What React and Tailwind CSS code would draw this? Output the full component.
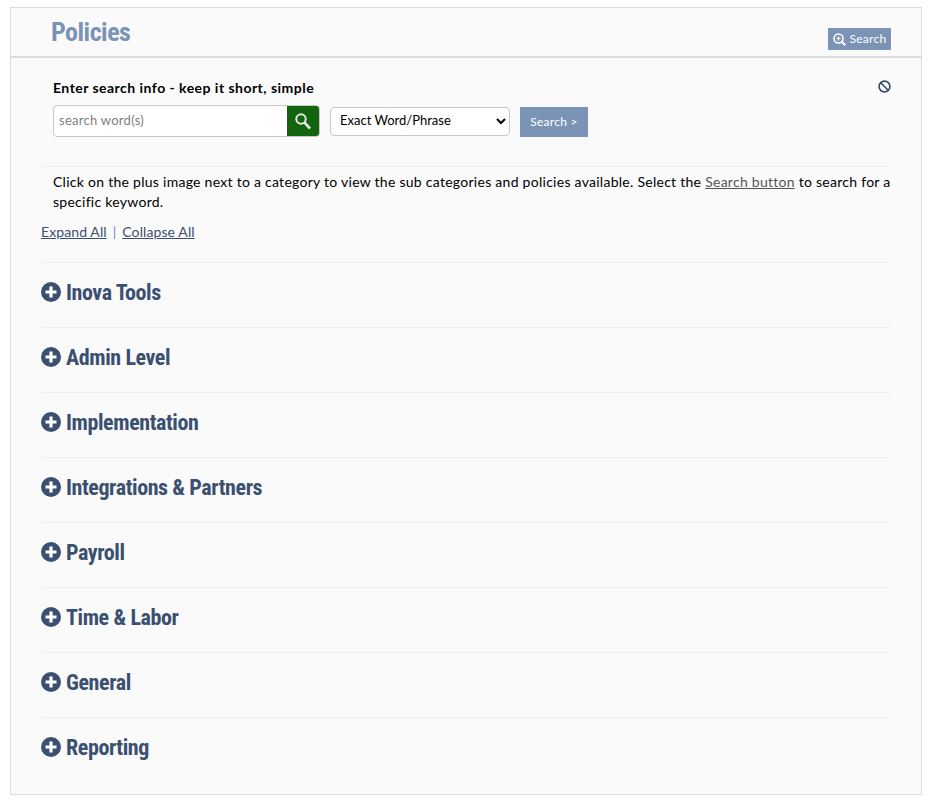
import React from 'react';

const categories = [
  'Inova Tools',
  'Admin Level',
  'Implementation',
  'Integrations & Partners',
  'Payroll',
  'Time & Labor',
  'General',
  'Reporting',
];

const headingFont = "font-['Roboto',sans-serif] [font-stretch:75%]";

const PlusIcon = () => (
  <svg width="20" height="20" viewBox="0 0 20 20" className="shrink-0">
    <circle cx="10" cy="10" r="10" fill="#3b5070" />
    <path d="M10 4.5v11M4.5 10h11" stroke="#fff" strokeWidth="3.2" />
  </svg>
);

const App = () => {
  return (
    <div className="bg-white h-[808px] pt-[7px] pl-[10px] font-['Lato',sans-serif] text-[14px] tracking-[0.27px]">
      <div className="w-[912px] h-[788px] border border-[#dcdcdc] bg-[#fafafa]">
        {/* Header */}
        <div className="h-[50px] border-b-2 border-[#dcdcdc] flex justify-between pl-[40px] pr-[30px]">
          <h1 className={`${headingFont} text-[26px] leading-[48px] font-bold tracking-[-0.5px] text-[#7b93b4]`}>Policies</h1>
          <button className="mt-[20px] w-[63px] h-[22px] bg-[#7b93b4] text-white text-[12px] flex items-center justify-center gap-1">
            <svg width="13" height="13" viewBox="0 0 13 13" fill="none" stroke="#fff">
              <circle cx="5.5" cy="5.5" r="4.5" strokeWidth="1.6" />
              <path d="M9 9l3.2 3.2" strokeWidth="2.2" />
              <path d="M3.5 5.5h4M5.5 3.5v4" strokeWidth="1.2" />
            </svg>
            Search
          </button>
        </div>

        <div className="px-[30px]">
          {/* Search form */}
          <div className="relative h-[109px] border-b border-[#eeeeee] pt-[21px] pl-[12px]">
            <div className="font-bold text-black leading-[18px] tracking-[0.47px]">Enter search info - keep it short, simple</div>
            <div className="flex items-center mt-[8px]">
              <div className="flex w-[267px] h-[32px] border border-[#c8c8c8] rounded-[4px] overflow-hidden bg-white">
                <div className="flex-1 pl-[5px] leading-[28px] text-[13px] text-[#808080]">search word(s)</div>
                <div className="w-[32px] bg-[#13640f] flex items-center justify-center">
                  <svg width="18" height="18" viewBox="0 0 18 18" fill="none" stroke="#e4e8e4">
                    <circle cx="7" cy="7" r="4.7" strokeWidth="2" />
                    <path d="M10.5 10.5l5.5 6" strokeWidth="2.6" />
                  </svg>
                </div>
              </div>
              <select
                defaultValue="Exact Word/Phrase"
                className="ml-[10px] w-[180px] h-[29px] border border-[#c8c8c8] rounded-[4px] bg-white pl-[5px] pb-[2px] text-black text-[13px] tracking-normal"
              >
                <option>Exact Word/Phrase</option>
                <option>Any Word</option>
              </select>
              <button className="ml-[10px] w-[68px] h-[30px] mt-[1px] bg-[#7b93b4] text-white text-[12px]">Search &gt;</button>
            </div>
            <svg
              width="13"
              height="13"
              viewBox="0 0 13 13"
              fill="none"
              stroke="#334a68"
              strokeWidth="1.6"
              className="absolute right-0 top-[22px]"
            >
              <circle cx="6.5" cy="6.5" r="5.4" />
              <path d="M2.8 2.8l7.4 7.4" />
            </svg>
          </div>

          {/* Intro */}
          <p className="pl-[12px] pt-[5px] leading-[20px] text-black">
            Click on the plus image next to a category to view the sub categories and policies available. Select the{' '}
            <a href="#" className="underline text-[#555555]">Search button</a> to search for a specific keyword.
          </p>
          <div className="mt-[10px] h-[20px] leading-[20px] tracking-[0.1px] text-[#3b5070]">
            <a href="#" className="underline">Expand All</a>
            <span className="mx-[6px] text-[#6a8fb8]">|</span>
            <a href="#" className="underline">Collapse All</a>
          </div>

          {/* Categories */}
          <div className="mt-[20px]">
            {categories.map(name => (
              <div key={name} className="h-[65px] pb-[6px] border-t border-[#eeeeee] flex items-center gap-[5px]">
                <PlusIcon />
                <span className={`${headingFont} text-[22px] font-bold tracking-[-0.4px] text-[#3b5070]`}>{name}</span>
              </div>
            ))}
          </div>
        </div>
      </div>
    </div>
  );
};

export default App;
